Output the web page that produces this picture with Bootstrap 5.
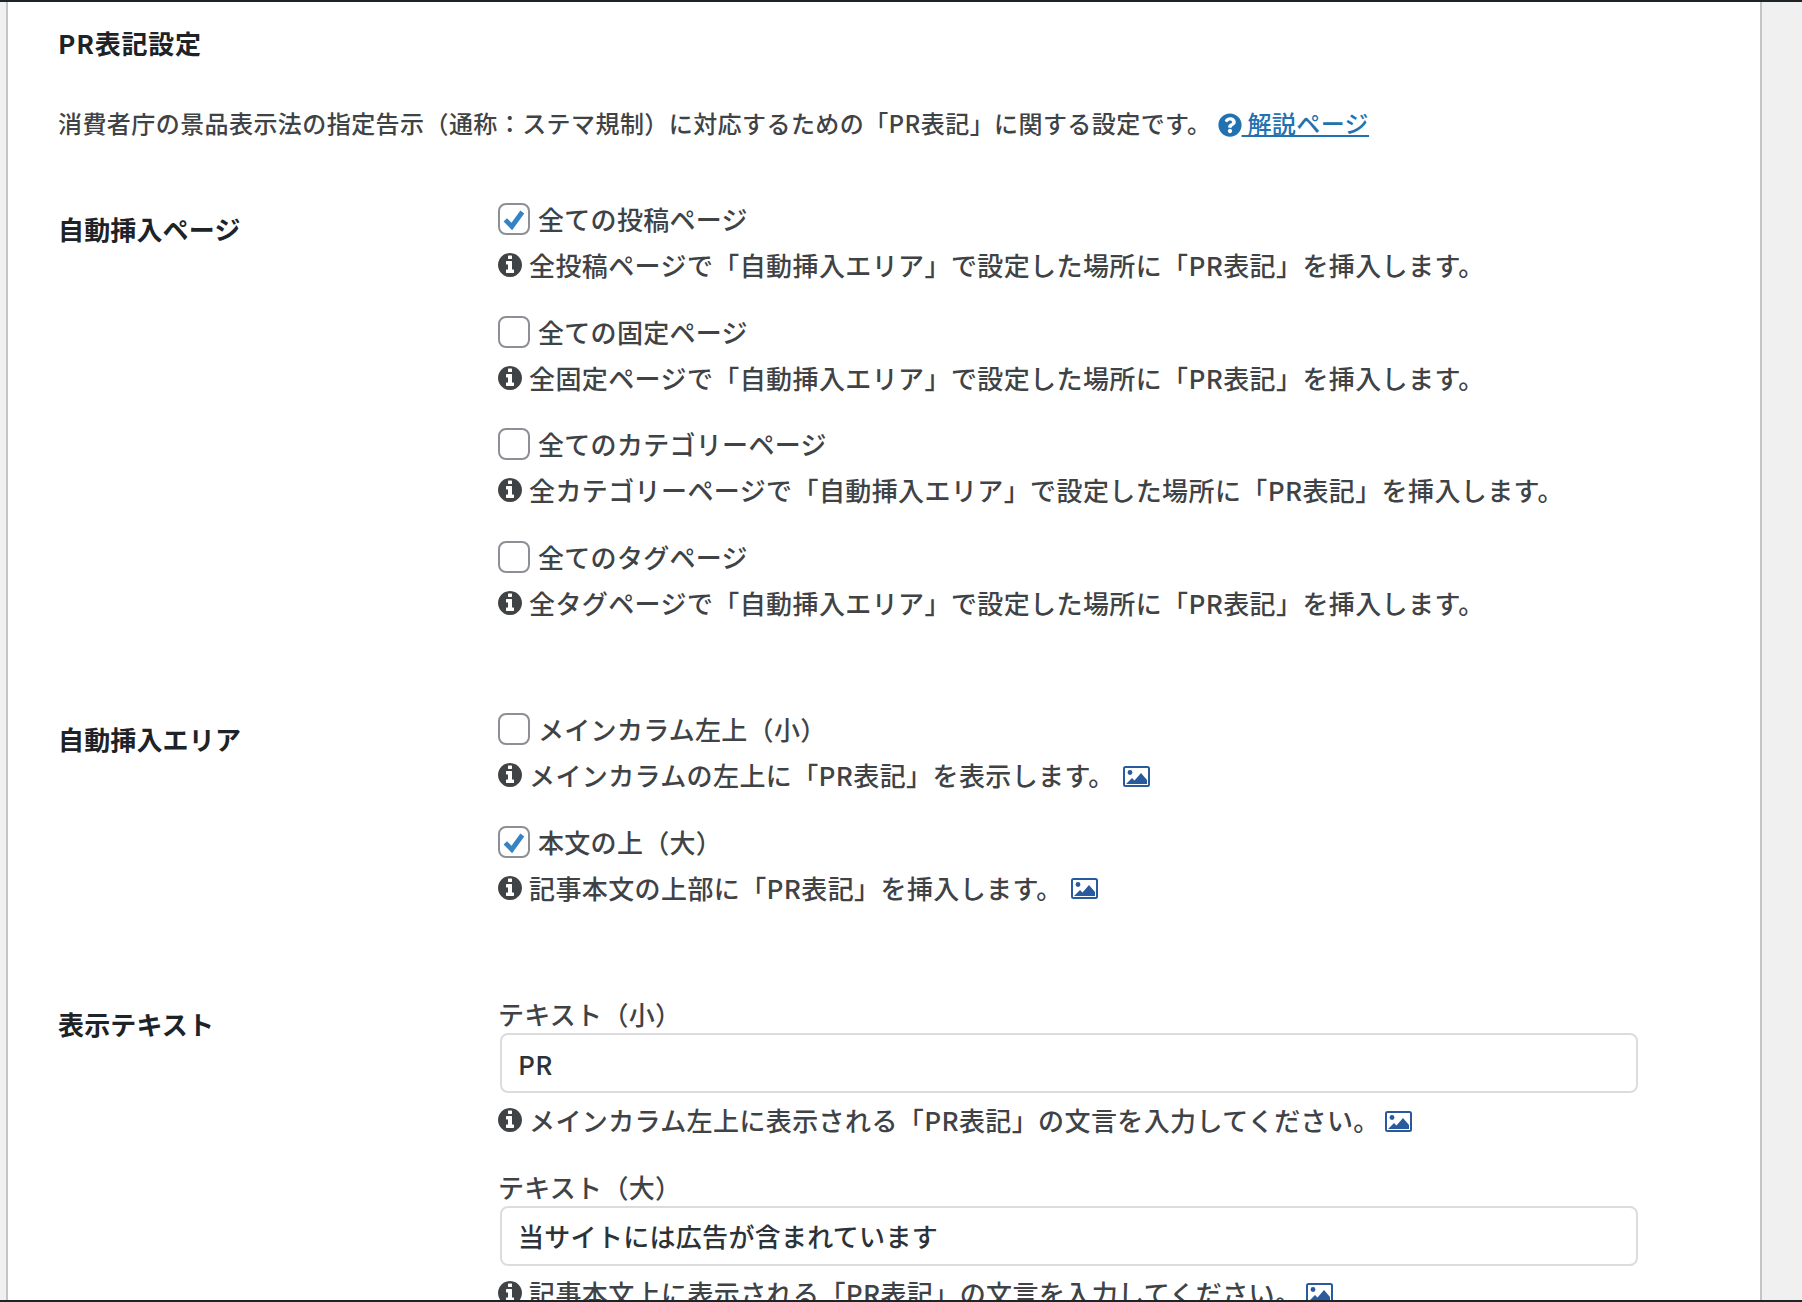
<!DOCTYPE html>
<html lang="ja">
<head>
    <meta charset="UTF-8">
    <meta name="viewport" content="width=device-width, initial-scale=1.0">
    <title>PR表記設定</title>
    <link href="https://cdn.jsdelivr.net/npm/bootstrap@5.3.0/dist/css/bootstrap.min.css" rel="stylesheet">
    <style>
        html, body {
            height: 100%;
        }
        body {
            background: #f0f0f1;
            color: #404346;
            font-family: "Noto Sans CJK JP", "Noto Sans", sans-serif;
            font-size: 26px;
            font-weight: 500;
            line-height: 36px;
            overflow: hidden;
        }
        .shot-frame {
            height: 1302px;
            border-top: 2px solid #1d2327;
            border-bottom: 2px solid #1d2327;
            padding: 0 40px 0 6px;
            overflow: hidden;
        }
        .settings-panel {
            background: #fff;
            border-left: 2px solid #c3c4c7;
            border-right: 2px solid #c3c4c7;
            min-height: 100%;
            padding: 23px 0 0 50px;
        }
        .panel-title {
            color: #1d2327;
            font-size: 26px;
            font-weight: 700;
            letter-spacing: .8px;
            line-height: 36px;
            margin: 0 0 44px;
        }
        .panel-intro {
            font-size: 24px;
            letter-spacing: .43px;
            margin: 0 0 60px;
        }
        .panel-intro a {
            color: #2271b1;
        }
        .help-icon {
            width: 24px;
            height: 24px;
            fill: #2271b1;
            vertical-align: -4px;
            margin-left: 6px;
        }
        .setting-row {
            margin-bottom: 90.5px;
        }
        .setting-label {
            color: #1d2327;
            flex: 0 0 440px;
            font-weight: 700;
            letter-spacing: .15px;
            padding-top: 10px;
        }
        .setting-body {
            width: 1139px;
        }
        .option-group {
            margin-bottom: 30.5px;
        }
        .option-group:last-child {
            margin-bottom: 0;
        }
        .option-check {
            align-items: center;
            display: flex;
            gap: 8px;
            letter-spacing: .3px;
            margin-bottom: 10px;
        }
        .option-check .form-check-input {
            appearance: none;
            border: 2px solid #8c8f94;
            border-radius: 8px;
            flex: none;
            height: 32px;
            margin: 0;
            width: 32px;
        }
        .option-check .form-check-input:checked {
            background-color: #fff;
            background-image: url("data:image/svg+xml,%3Csvg xmlns='http://www.w3.org/2000/svg' viewBox='0 0 32 32'%3E%3Cpath d='M6 17l7.500 7.500L25.500 8' fill='none' stroke='%233582c4' stroke-width='5.500'/%3E%3C/svg%3E");
            background-size: 100% 100%;
            border-color: #8c8f94;
        }
        .option-note {
            align-items: center;
            display: flex;
            gap: 7px;
            letter-spacing: .4px;
        }
        .info-icon {
            fill: #404346;
            flex: none;
            height: 24px;
            width: 24px;
        }
        .shot-icon {
            flex: none;
            height: 21px;
            margin: 2px 0 0 1px;
            width: 27px;
        }
        .text-label {
            display: block;
            letter-spacing: .3px;
            margin: 0;
        }
        .text-input {
            border: 2px solid #dcdcde;
            border-radius: 8px;
            color: #2c3338;
            font-size: 26px;
            font-weight: 500;
            height: 60px;
            letter-spacing: .3px;
            margin: 1px 0 0 2px;
            padding: 0 16px;
            width: 1138px;
        }
        .text-input + .option-note {
            margin-top: 9px;
        }
        .text-input + .option-note .shot-icon {
            margin-left: -2px;
        }
    </style>
</head>
<body>
    <svg class="d-none">
        <symbol id="ico-info" viewBox="128 128 1536 1536">
            <path d="M1152 1376v-160q0-14-9-23t-23-9h-96v-512q0-14-9-23t-23-9h-320q-14 0-23 9t-9 23v160q0 14 9 23t23 9h96v320h-96q-14 0-23 9t-9 23v160q0 14 9 23t23 9h448q14 0 23-9t9-23zm-128-896v-160q0-14-9-23t-23-9h-192q-14 0-23 9t-9 23v160q0 14 9 23t23 9h192q14 0 23-9t9-23zm640 416q0 209-103 385.500t-279.500 279.500-385.500 103-385.500-103-279.500-279.500-103-385.500 103-385.500 279.500-279.500 385.500-103 385.500 103 279.500 279.500 103 385.500z"/>
        </symbol>
        <symbol id="ico-shot" viewBox="0 0 27 21">
            <rect x="1" y="1" width="25" height="19" rx="1.500" fill="#fff" stroke="#2a5a9e" stroke-width="2"/>
            <circle cx="7" cy="6.500" r="2.400" fill="#2a5a9e"/>
            <path d="M3 18l6-6 2.500 2.500L18 7l6 7v4z" fill="#2a5a9e"/>
        </symbol>
    </svg>

    <div class="shot-frame">
        <div class="settings-panel">
            <h2 class="panel-title">PR表記設定</h2>
            <p class="panel-intro">消費者庁の景品表示法の指定告示（通称：ステマ規制）に対応するための「PR表記」に関する設定です。<svg class="help-icon" viewBox="0 0 512 512"><path d="M504 256c0 136.997-111.043 248-248 248S8 392.997 8 256C8 119.083 119.043 8 256 8s248 111.083 248 248zM262.655 90c-54.497 0-89.255 22.957-116.549 63.758-3.536 5.286-2.353 12.415 2.715 16.258l34.699 26.31c5.205 3.947 12.621 3.008 16.665-2.122 17.864-22.658 30.113-35.797 57.303-35.797 20.429 0 45.698 13.148 45.698 32.958 0 14.976-12.363 22.667-32.534 33.976C247.128 238.528 216 254.941 216 296v4c0 6.627 5.373 12 12 12h56c6.627 0 12-5.373 12-12v-1.333c0-28.462 83.186-29.647 83.186-106.667 0-58.002-60.165-102-116.531-102zM256 338c-25.365 0-46 20.635-46 46 0 25.364 20.635 46 46 46s46-20.636 46-46c0-25.365-20.635-46-46-46z"/></svg><a href="#">&nbsp;解説ページ</a></p>

            <!-- 自動挿入ページ -->
            <div class="setting-row d-flex">
                <div class="setting-label">自動挿入ページ</div>
                <div class="setting-body">
                    <div class="option-group">
                        <label class="option-check"><input class="form-check-input" type="checkbox" checked>全ての投稿ページ</label>
                        <div class="option-note"><svg class="info-icon"><use href="#ico-info"/></svg>全投稿ページで「自動挿入エリア」で設定した場所に「PR表記」を挿入します。</div>
                    </div>
                    <div class="option-group">
                        <label class="option-check"><input class="form-check-input" type="checkbox">全ての固定ページ</label>
                        <div class="option-note"><svg class="info-icon"><use href="#ico-info"/></svg>全固定ページで「自動挿入エリア」で設定した場所に「PR表記」を挿入します。</div>
                    </div>
                    <div class="option-group">
                        <label class="option-check"><input class="form-check-input" type="checkbox">全てのカテゴリーページ</label>
                        <div class="option-note"><svg class="info-icon"><use href="#ico-info"/></svg>全カテゴリーページで「自動挿入エリア」で設定した場所に「PR表記」を挿入します。</div>
                    </div>
                    <div class="option-group">
                        <label class="option-check"><input class="form-check-input" type="checkbox">全てのタグページ</label>
                        <div class="option-note"><svg class="info-icon"><use href="#ico-info"/></svg>全タグページで「自動挿入エリア」で設定した場所に「PR表記」を挿入します。</div>
                    </div>
                </div>
            </div>

            <!-- 自動挿入エリア -->
            <div class="setting-row d-flex">
                <div class="setting-label">自動挿入エリア</div>
                <div class="setting-body">
                    <div class="option-group">
                        <label class="option-check"><input class="form-check-input" type="checkbox">メインカラム左上（小）</label>
                        <div class="option-note"><svg class="info-icon"><use href="#ico-info"/></svg>メインカラムの左上に「PR表記」を表示します。<svg class="shot-icon"><use href="#ico-shot"/></svg></div>
                    </div>
                    <div class="option-group">
                        <label class="option-check"><input class="form-check-input" type="checkbox" checked>本文の上（大）</label>
                        <div class="option-note"><svg class="info-icon"><use href="#ico-info"/></svg>記事本文の上部に「PR表記」を挿入します。<svg class="shot-icon"><use href="#ico-shot"/></svg></div>
                    </div>
                </div>
            </div>

            <!-- 表示テキスト -->
            <div class="setting-row d-flex">
                <div class="setting-label">表示テキスト</div>
                <div class="setting-body">
                    <div class="option-group">
                        <label class="text-label" for="prSmall">テキスト（小）</label>
                        <input class="form-control text-input" id="prSmall" type="text" value="PR">
                        <div class="option-note"><svg class="info-icon"><use href="#ico-info"/></svg>メインカラム左上に表示される「PR表記」の文言を入力してください。<svg class="shot-icon"><use href="#ico-shot"/></svg></div>
                    </div>
                    <div class="option-group">
                        <label class="text-label" for="prLarge">テキスト（大）</label>
                        <input class="form-control text-input" id="prLarge" type="text" value="当サイトには広告が含まれています">
                        <div class="option-note"><svg class="info-icon"><use href="#ico-info"/></svg>記事本文上に表示される「PR表記」の文言を入力してください。<svg class="shot-icon"><use href="#ico-shot"/></svg></div>
                    </div>
                </div>
            </div>
        </div>
    </div>

    <script src="https://cdn.jsdelivr.net/npm/bootstrap@5.3.0/dist/js/bootstrap.bundle.min.js"></script>
</body>
</html>
